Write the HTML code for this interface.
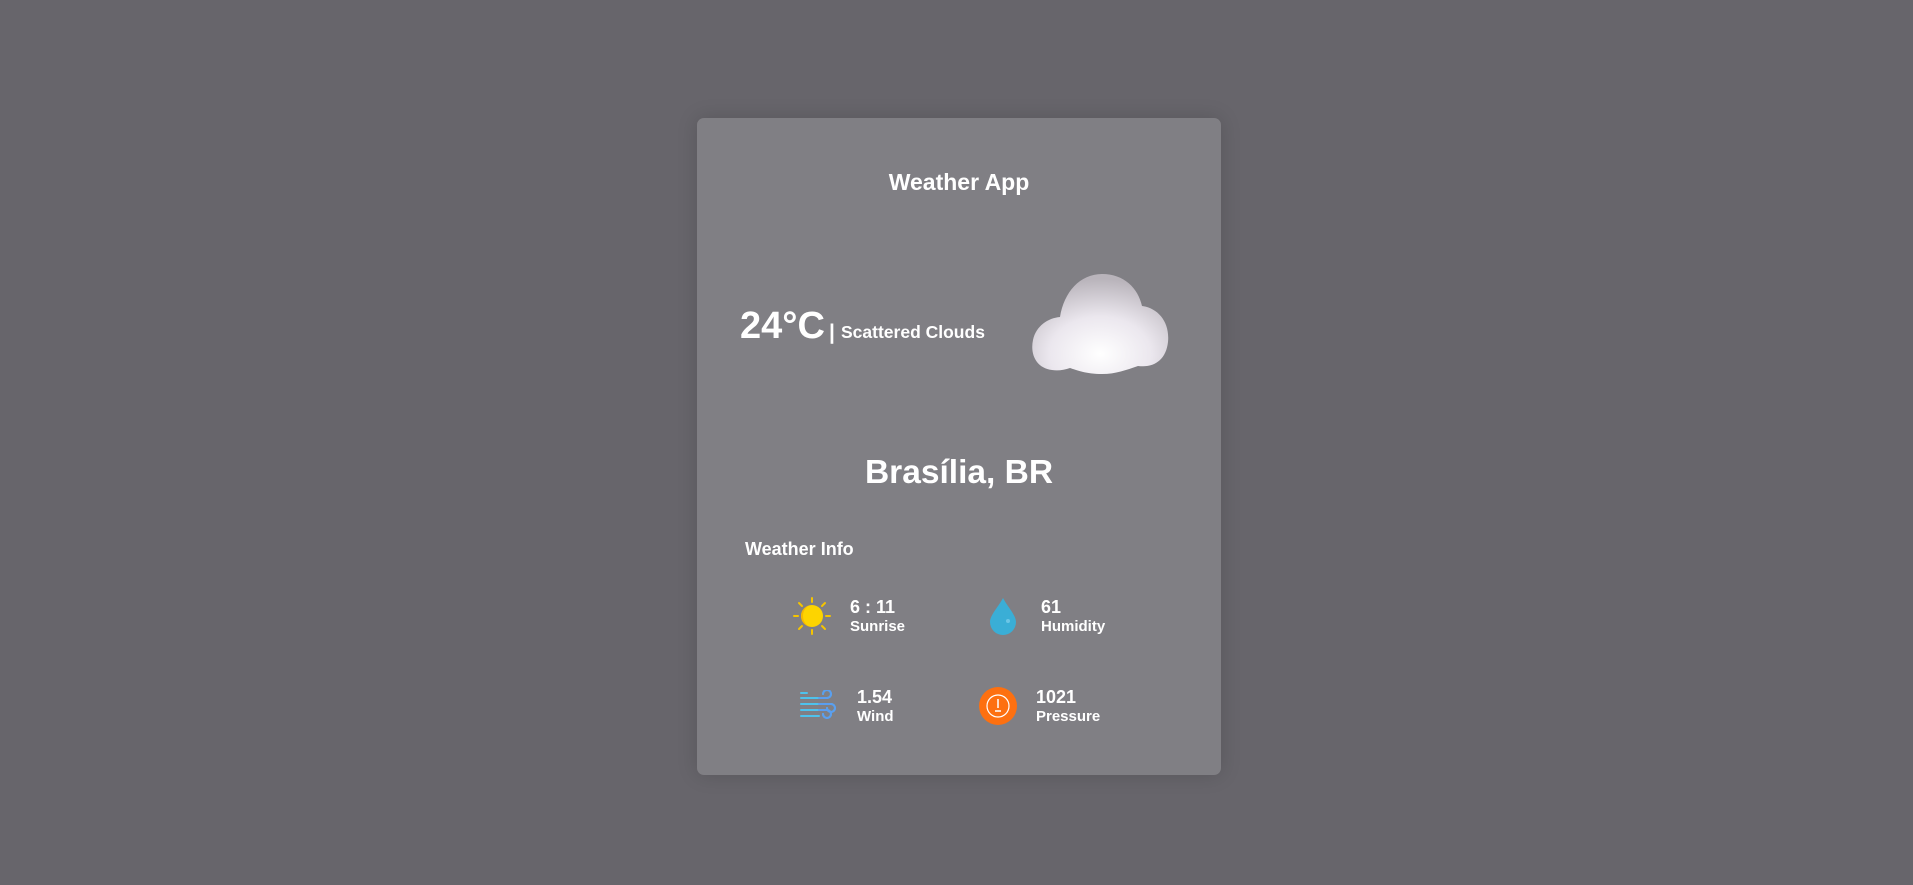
<!DOCTYPE html>
<html><head><meta charset="utf-8"><style>
*{margin:0;padding:0;box-sizing:border-box}
body{width:1913px;height:885px;background:#67656b;font-family:"Liberation Sans",Arial,sans-serif;color:#fff;position:relative;overflow:hidden;font-weight:bold}
.card{position:absolute;left:697px;top:118px;width:524px;height:657px;background:#807f84;border-radius:7px;box-shadow:0 0 20px rgba(0,0,0,.15)}
.a{position:absolute;white-space:nowrap;line-height:1}
</style></head><body>
<div class="card"></div>
<div class="a" style="left:0;width:1918px;text-align:center;top:171px;font-size:23px">Weather App</div>
<div class="a" style="left:740px;top:307px;font-size:38px">24°C</div>
<div class="a" style="left:829px;top:322px;font-size:21px">|</div>
<div class="a" style="left:841px;top:324px;font-size:17.5px">Scattered Clouds</div>
<svg class="a" style="left:1030px;top:270px" width="142" height="106" viewBox="0 0 142 106">
<defs><radialGradient id="g" cx="0.5" cy="0.8" r="0.75"><stop offset="0" stop-color="#ffffff"/><stop offset="0.5" stop-color="#ebe7ee"/><stop offset="1" stop-color="#b9b4bb"/></radialGradient></defs>
<path d="M22 100 C6 98 0 84 3 70 C6 56 18 48 30 47 C34 22 50 4 72 4 C94 4 108 18 112 36 C128 38 140 52 138 72 C136 90 124 98 108 96 C96 100 86 104 72 104 C56 104 46 100 40 98 C34 100 28 101 22 100 Z" fill="url(#g)"/>
</svg>
<div class="a" style="left:0;width:1918px;text-align:center;top:456px;font-size:33.5px">Brasília, BR</div>
<div class="a" style="left:745px;top:540px;font-size:18px">Weather Info</div>
<svg class="a" style="left:793px;top:597px" width="38" height="38" viewBox="0 0 38 38"><g stroke="#f5c400" stroke-width="2" stroke-linecap="round"><path d="M19 1v4M19 33v4M1 19h4M33 19h4M6 6l3 3M29 29l3 3M6 32l3-3M29 9l3-3"/></g><circle cx="19" cy="19" r="11" fill="#fdd400"/><path d="M19 8a11 11 0 0 0 0 22a9 11 0 0 1 0-22z" fill="#f5b800"/></svg>
<div class="a" style="left:850px;top:598px;font-size:18px">6 : 11</div>
<div class="a" style="left:850px;top:619px;font-size:15px">Sunrise</div>
<svg class="a" style="left:989px;top:597px" width="28" height="39" viewBox="0 0 28 39"><path d="M14 1C10 9 1 18 1 25a13 13 0 0 0 26 0C27 18 18 9 14 1z" fill="#3aaed6"/><circle cx="19" cy="24" r="2" fill="#6cc6e6"/></svg>
<div class="a" style="left:1041px;top:598px;font-size:18px">61</div>
<div class="a" style="left:1041px;top:619px;font-size:15px">Humidity</div>
<svg class="a" style="left:799px;top:690px" width="38" height="32" viewBox="0 0 38 32"><g fill="none" stroke-width="2" stroke-linecap="round"><path d="M2 8h26a4 4 0 1 0-4-4M2 14h30a4 4 0 1 1-4 4M2 20h26a4 4 0 1 1-4 4M2 26h18M2 3h6" stroke="#4ec2ec"/><path d="M20 8h8a4 4 0 1 0-4-4M20 14h12a4 4 0 1 1-4 4M20 20h8a4 4 0 1 1-4 4" stroke="#5a9ef0"/></g></svg>
<div class="a" style="left:857px;top:688px;font-size:18px">1.54</div>
<div class="a" style="left:857px;top:709px;font-size:15px">Wind</div>
<svg class="a" style="left:979px;top:687px" width="38" height="38" viewBox="0 0 38 38"><circle cx="19" cy="19" r="19" fill="#fd7010"/><circle cx="19" cy="19" r="11" fill="none" stroke="#fff" stroke-width="1.2"/><path d="M19 12v9M16 24h6" stroke="#fff" stroke-width="1.5"/></svg>
<div class="a" style="left:1036px;top:688px;font-size:18px">1021</div>
<div class="a" style="left:1036px;top:709px;font-size:15px">Pressure</div>
</body></html>
